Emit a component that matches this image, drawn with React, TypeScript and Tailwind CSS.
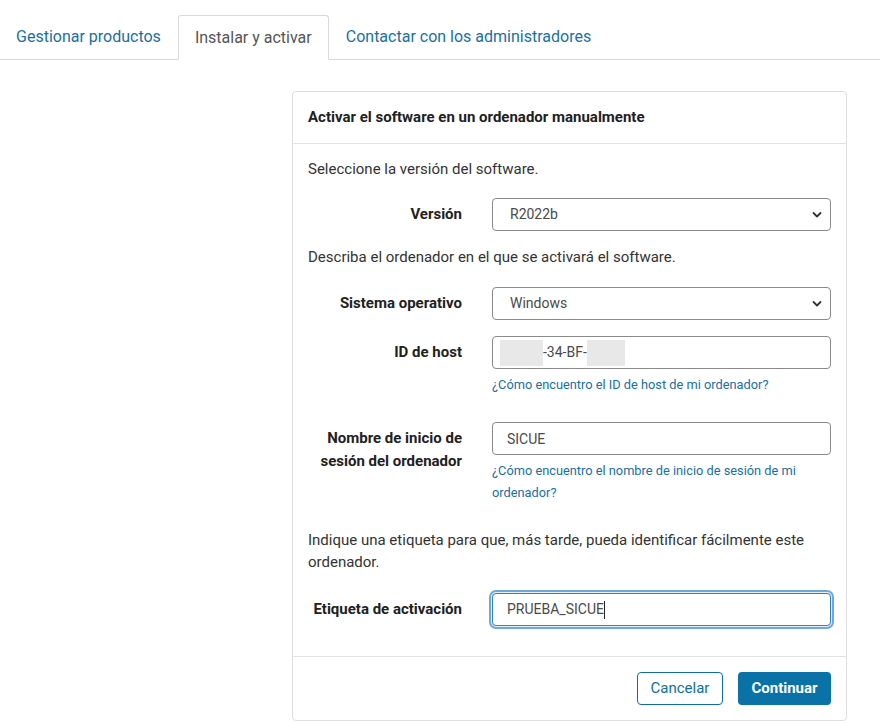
import React from 'react'

const Chevron = () => (
    <svg className="pointer-events-none absolute right-[9px] top-1/2 -translate-y-1/2" width="10" height="7" viewBox="0 0 10 7" fill="none">
        <path d="M1.5 1.5L5 5L8.5 1.5" stroke="#333" strokeWidth="1.8" strokeLinecap="round" strokeLinejoin="round" />
    </svg>
)

const Select = ({ value }: { value: string }) => (
    <div className="relative">
        <select
            defaultValue={value}
            className="h-[33px] w-full appearance-none rounded-[4px] border border-[#8a8a8a] bg-white pl-[17px] pr-8 text-[14px] text-[#4a4a4a] outline-none"
        >
            <option>{value}</option>
        </select>
        <Chevron />
    </div>
)

const Row = ({ label, children }: { label: React.ReactNode; children: React.ReactNode }) => (
    <div className="grid grid-cols-[154px_1fr] gap-x-[30px] items-start">
        <div className="pt-[5px] text-right text-[15px] font-bold leading-[23px] text-[#212121]">{label}</div>
        <div>{children}</div>
    </div>
)

const App = () => {
    return (
        <div className="min-h-[723px] w-full bg-white font-['Roboto',sans-serif] text-[#333]">
            {/* tabs */}
            <div className="flex border-b border-[#d9d9d9] pt-[15px]">
                <div className="flex h-[44px] items-center pl-4 pr-[17px] text-[16px] text-[#1a6fa3]">Gestionar productos</div>
                <div className="-mb-px flex h-[45px] items-center rounded-t-[3px] border border-b-white border-[#d9d9d9] bg-white px-4 text-[16px] text-[#555]">
                    Instalar y activar
                </div>
                <div className="flex h-[44px] items-center px-[17px] text-[16px] text-[#1a6fa3]">Contactar con los administradores</div>
            </div>

            {/* card */}
            <div className="ml-[292px] mt-[31px] w-[555px] rounded-[4px] border border-[#dedede]">
                <div className="flex h-[52px] items-center border-b border-[#e3e3e3] px-[15px] text-[15px] font-bold text-[#212121]">
                    Activar el software en un ordenador manualmente
                </div>

                <div className="px-[15px] pt-[14px] pb-[30px]">
                    <p className="text-[15px] leading-[22px]">Seleccione la versión del software.</p>

                    <div className="mt-[18px]">
                        <Row label="Versión">
                            <Select value="R2022b" />
                        </Row>
                    </div>

                    <p className="mt-[15px] text-[15px] leading-[22px]">Describa el ordenador en el que se activará el software.</p>

                    <div className="mt-[19px]">
                        <Row label="Sistema operativo">
                            <Select value="Windows" />
                        </Row>
                    </div>

                    <div className="mt-[16px]">
                        <Row label="ID de host">
                            <div className="flex h-[33px] items-center rounded-[4px] border border-[#8a8a8a] pl-[7px] text-[14px] text-[#4a4a4a]">
                                <span className="h-[26px] w-[43px] bg-[#e8e8e8]" />
                                <span>-34-BF-</span>
                                <span className="h-[26px] w-[38px] bg-[#e8e8e8]" />
                            </div>
                            <a className="mt-[5px] block text-[12.8px] leading-[22px] text-[#1a6fa3]">¿Cómo encuentro el ID de host de mi ordenador?</a>
                        </Row>
                    </div>

                    <div className="mt-[26px]">
                        <Row label={<>Nombre de inicio de<br />sesión del ordenador</>}>
                            <input
                                defaultValue="SICUE"
                                className="h-[33px] w-full rounded-[4px] border border-[#8a8a8a] px-[14px] text-[14px] text-[#4a4a4a] outline-none"
                            />
                            <a className="mt-[5px] block pr-8 text-[12.8px] leading-[22px] text-[#1a6fa3]">
                                ¿Cómo encuentro el nombre de inicio de sesión de mi ordenador?
                            </a>
                        </Row>
                    </div>

                    <p className="mt-[25px] text-[15px] leading-[22px]">
                        Indique una etiqueta para que, más tarde, pueda identificar fácilmente este ordenador.
                    </p>

                    <div className="mt-[20px]">
                        <Row label="Etiqueta de activación">
                            <div className="flex h-[33px] items-center rounded-[4px] border border-[#2f7fc1] px-[14px] text-[14px] text-[#4a4a4a] shadow-[0_0_0_1px_#e6f1fb,0_0_0_3px_#6fa9dc]">
                                PRUEBA_SICUE<span className="h-[18px] w-px bg-[#222]" />
                            </div>
                        </Row>
                    </div>
                </div>

                <div className="flex justify-end gap-[15px] border-t border-[#e3e3e3] px-[15px] py-[15px]">
                    <button className="h-[33px] w-[86px] rounded-[4px] border border-[#0b6fa4] bg-white text-[15px] text-[#0b6fa4]">Cancelar</button>
                    <button className="h-[33px] w-[93px] rounded-[4px] bg-[#0a72a6] text-[15px] font-bold text-white">Continuar</button>
                </div>
            </div>
        </div>
    )
}

export default App
